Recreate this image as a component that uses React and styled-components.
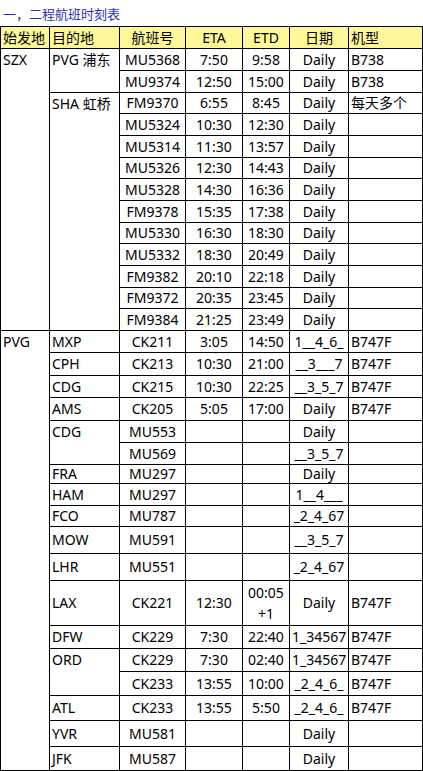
import styled, { createGlobalStyle } from 'styled-components'

const GlobalStyle = createGlobalStyle`
  html, body {
    margin: 0;
    padding: 0;
    background: #ffffff;
  }
  body {
    font-family: "Noto Sans", "Noto Sans CJK SC", sans-serif;
    color: #000;
  }
`

const Page = styled.div`
  width: 423px;
`

const Title = styled.div`
  height: 26px;
  line-height: 26px;
  padding-left: 3px;
  padding-top: 1px;
  box-sizing: border-box;
  font-size: 13px;
  color: #2b2fa8;
  font-family: "Noto Sans CJK SC", "Noto Sans", sans-serif;
`

const Table = styled.table`
  border-collapse: collapse;
  table-layout: fixed;
  width: 422px;
  font-size: 14px;
  line-height: 18px;
`

const Row = styled.tr`
  height: ${({ $h }) => $h}px;
`

const HeadCell = styled.th`
  background: #fef89a;
  border: 1px solid #000;
  font-weight: normal;
  padding: 0 2px;
  text-align: ${({ $align }) => $align || 'center'};
  white-space: nowrap;
  overflow: hidden;
`

const Cell = styled.td`
  border: 1px solid #000;
  padding: 0 2px;
  text-align: ${({ $align }) => $align || 'center'};
  vertical-align: ${({ $top }) => ($top ? 'top' : 'middle')};
  padding-top: ${({ $top }) => ($top ? '2px' : '0')};
  line-height: ${({ $wrap }) => ($wrap ? '21px' : '18px')};
  white-space: ${({ $wrap }) => ($wrap ? 'normal' : 'nowrap')};
  overflow: hidden;
`

const widths = [49, 70, 66, 57, 47, 59, 74]

//--------- FLIGHT DATA ---------
const flights = [
  { h: 22, origin: ['SZX', 13], dest: ['PVG 浦东', 2], no: 'MU5368', eta: '7:50', etd: '9:58', days: 'Daily', type: 'B738' },
  { h: 22, no: 'MU9374', eta: '12:50', etd: '15:00', days: 'Daily', type: 'B738' },
  { h: 21, dest: ['SHA 虹桥', 11], no: 'FM9370', eta: '6:55', etd: '8:45', days: 'Daily', type: '每天多个' },
  { h: 22, no: 'MU5324', eta: '10:30', etd: '12:30', days: 'Daily' },
  { h: 22, no: 'MU5314', eta: '11:30', etd: '13:57', days: 'Daily' },
  { h: 21, no: 'MU5326', eta: '12:30', etd: '14:43', days: 'Daily' },
  { h: 22, no: 'MU5328', eta: '14:30', etd: '16:36', days: 'Daily' },
  { h: 22, no: 'FM9378', eta: '15:35', etd: '17:38', days: 'Daily' },
  { h: 21, no: 'MU5330', eta: '16:30', etd: '18:30', days: 'Daily' },
  { h: 22, no: 'MU5332', eta: '18:30', etd: '20:49', days: 'Daily' },
  { h: 22, no: 'FM9382', eta: '20:10', etd: '22:18', days: 'Daily' },
  { h: 21, no: 'FM9372', eta: '20:35', etd: '23:45', days: 'Daily' },
  { h: 22, no: 'FM9384', eta: '21:25', etd: '23:49', days: 'Daily' },
  { h: 22, origin: ['PVG', 18], dest: ['MXP', 1], no: 'CK211', eta: '3:05', etd: '14:50', days: '1__4_6_', type: 'B747F' },
  { h: 23, dest: ['CPH', 1], no: 'CK213', eta: '10:30', etd: '21:00', days: '__3___7', type: 'B747F' },
  { h: 22, dest: ['CDG', 1], no: 'CK215', eta: '10:30', etd: '22:25', days: '__3_5_7', type: 'B747F' },
  { h: 23, dest: ['AMS', 1], no: 'CK205', eta: '5:05', etd: '17:00', days: 'Daily', type: 'B747F' },
  { h: 22, dest: ['CDG', 2], no: 'MU553', days: 'Daily' },
  { h: 22, no: 'MU569', days: '__3_5_7' },
  { h: 19, dest: ['FRA', 1], no: 'MU297', days: 'Daily' },
  { h: 22, dest: ['HAM', 1], no: 'MU297', days: '1__4___' },
  { h: 21, dest: ['FCO', 1], no: 'MU787', days: '_2_4_67' },
  { h: 27, dest: ['MOW', 1], no: 'MU591', days: '__3_5_7' },
  { h: 27, dest: ['LHR', 1], no: 'MU551', days: '_2_4_67' },
  { h: 45, dest: ['LAX', 1], no: 'CK221', eta: '12:30', etd: '00:05 +1', wrap: true, days: 'Daily', type: 'B747F' },
  { h: 23, dest: ['DFW', 1], no: 'CK229', eta: '7:30', etd: '22:40', days: '1_34567', type: 'B747F' },
  { h: 23, dest: ['ORD', 2], no: 'CK229', eta: '7:30', etd: '02:40', days: '1_34567', type: 'B747F' },
  { h: 24, no: 'CK233', eta: '13:55', etd: '10:00', days: '_2_4_6_', type: 'B747F' },
  { h: 25, dest: ['ATL', 1], no: 'CK233', eta: '13:55', etd: '5:50', days: '_2_4_6_', type: 'B747F' },
  { h: 26, dest: ['YVR', 1], no: 'MU581', days: 'Daily' },
  { h: 24, dest: ['JFK', 1], no: 'MU587', days: 'Daily' },
]
//--------- FLIGHT DATA ---------

export default function App() {
  return (
    <>
      <GlobalStyle />
      <Page>
        <Title>一，二程航班时刻表</Title>
        <Table>
          <colgroup>
            {widths.map((w, i) => <col key={i} style={{ width: w }} />)}
          </colgroup>
          <thead>
            <Row $h={22}>
              <HeadCell $align="left">始发地</HeadCell>
              <HeadCell $align="left">目的地</HeadCell>
              <HeadCell>航班号</HeadCell>
              <HeadCell>ETA</HeadCell>
              <HeadCell>ETD</HeadCell>
              <HeadCell>日期</HeadCell>
              <HeadCell $align="left">机型</HeadCell>
            </Row>
          </thead>
          <tbody>
            {flights.map((f, i) => (
              <Row key={i} $h={f.h}>
                {f.origin && (
                  <Cell $align="left" $top rowSpan={f.origin[1]}>{f.origin[0]}</Cell>
                )}
                {f.dest && (
                  <Cell $align="left" $top={f.dest[1] > 1} rowSpan={f.dest[1]}>{f.dest[0]}</Cell>
                )}
                <Cell>{f.no}</Cell>
                <Cell>{f.eta}</Cell>
                <Cell $wrap={f.wrap}>{f.etd}</Cell>
                <Cell>{f.days}</Cell>
                <Cell $align="left">{f.type}</Cell>
              </Row>
            ))}
          </tbody>
        </Table>
      </Page>
    </>
  )
}
